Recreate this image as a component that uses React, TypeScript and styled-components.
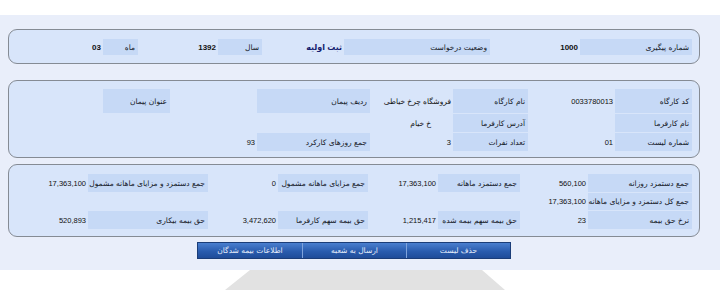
import React from 'react';
import styled, { createGlobalStyle } from 'styled-components';

const Global = createGlobalStyle`
  html, body { margin: 0; padding: 0; background: #ffffff; }
  body { font-family: "DejaVu Sans", sans-serif; }
  #root { width: 720px; }
`;

const Page = styled.div`
  width: 720px;
  height: 290px;
  overflow: hidden;
  display: flex;
  flex-direction: column;
`;

const TopStrip = styled.div`
  height: 15px;
  flex: none;
`;

const Workspace = styled.div`
  background: #e9eefa;
  padding: 14px 20px 11px 8px;
  display: flex;
  flex-direction: column;
`;

const Panel = styled.div<{ $cols: string; $rows: string; $pad: string; $mt: number }>`
  direction: rtl;
  box-sizing: border-box;
  margin-top: ${(p) => p.$mt}px;
  background: #d8e5fa;
  border: 1px solid #858b94;
  border-radius: 9px;
  padding: ${(p) => p.$pad};
  display: grid;
  grid-template-columns: ${(p) => p.$cols};
  grid-template-rows: ${(p) => p.$rows};
  row-gap: 1px;
`;

const Label = styled.div`
  background: #c6d9f6;
  color: #141826;
  font-family: "DejaVu Sans", sans-serif;
  font-size: 7.5px;
  display: flex;
  align-items: center;
  padding-right: 3px;
  white-space: nowrap;
  min-width: 0;
`;

const Value = styled.div<{ $bold?: boolean; $navy?: boolean; $indent?: number }>`
  color: ${(p) => (p.$navy ? '#14206e' : '#111111')};
  font-family: "Liberation Sans", "DejaVu Sans", sans-serif;
  font-weight: ${(p) => (p.$bold ? 700 : 400)};
  font-size: ${(p) => (p.$bold ? 8 : 7.5)}px;
  display: flex;
  align-items: center;
  padding-right: ${(p) => p.$indent ?? 2}px;
  white-space: nowrap;
`;

const Empty = styled.div``;

const ButtonBar = styled.div`
  margin-top: 5px;
  align-self: center;
  display: flex;
  direction: rtl;
  border: 1px solid #1b3d78;
`;

const ActionButton = styled.button`
  width: 104px;
  height: 15px;
  padding: 0;
  margin: 0;
  border: none;
  border-left: 1px solid #7fa3dc;
  background: linear-gradient(#4a7fcf, #2a5cae 55%, #1f4c99);
  color: #e6eefb;
  font-family: "DejaVu Sans", sans-serif;
  font-size: 7.5px;
  cursor: pointer;
  &:last-child { border-left: none; }
`;

const Shadow = styled.div`
  margin-left: 225px;
  width: 280px;
  height: 22px;
  background: #e2e2e2;
  clip-path: polygon(25px 0, 257px 0, 280px 100%, 0 100%);
`;

const cols1 = '112px 90px 146px 82px 44px 80px 35px 88px';
const cols2 = '77px 87px 75px 83px 113px 87px 67px 88px';
const cols3 = '104px 68px 82px 70px 90px 70px 120px 73px';

export default function App() {
  return (
    <Page>
      <Global />
      <TopStrip />
      <Workspace>
        <Panel $cols={cols1} $rows="16px" $pad="9px 7px 8px 6px" $mt={0}>
          <Label>شماره پیگیری</Label>
          <Value $bold>1000</Value>
          <Label>وضعیت درخواست</Label>
          <Value $bold $navy>ثبت اولیه</Value>
          <Label>سال</Label>
          <Value $bold>1392</Value>
          <Label>ماه</Label>
          <Value $bold>03</Value>
        </Panel>

        <Panel $cols={cols2} $rows="24px 18px 18px" $pad="8px 7px 6px 6px" $mt={16}>
          <Label>کد کارگاه</Label>
          <Value>0033780013</Value>
          <Label>نام کارگاه</Label>
          <Value>فروشگاه چرخ خیاطی</Value>
          <Label>ردیف پیمان</Label>
          <Value />
          <Label>عنوان پیمان</Label>
          <Value />

          <Label>نام کارفرما</Label>
          <Value />
          <Label>آدرس کارفرما</Label>
          <Value $indent={22}>خ خیام</Value>
          <Empty />
          <Empty />
          <Empty />
          <Empty />

          <Label>شماره لیست</Label>
          <Value>01</Value>
          <Label>تعداد نفرات</Label>
          <Value>3</Value>
          <Label>جمع روزهای کارکرد</Label>
          <Value>93</Value>
          <Empty />
          <Empty />
        </Panel>

        <Panel $cols={cols3} $rows="18px 17px 18px" $pad="9px 7px 7px 6px" $mt={6}>
          <Label>جمع دستمزد روزانه</Label>
          <Value>560,100</Value>
          <Label>جمع دستمزد ماهانه</Label>
          <Value>17,363,100</Value>
          <Label>جمع مزایای ماهانه مشمول</Label>
          <Value>0</Value>
          <Label>جمع دستمزد و مزایای ماهانه مشمول</Label>
          <Value>17,363,100</Value>

          <Label>جمع کل دستمزد و مزایای ماهانه</Label>
          <Value>17,363,100</Value>
          <Empty />
          <Empty />
          <Empty />
          <Empty />
          <Empty />
          <Empty />

          <Label>نرخ حق بیمه</Label>
          <Value>23</Value>
          <Label>حق بیمه سهم بیمه شده</Label>
          <Value>1,215,417</Value>
          <Label>حق بیمه سهم کارفرما</Label>
          <Value>3,472,620</Value>
          <Label>حق بیمه بیکاری</Label>
          <Value>520,893</Value>
        </Panel>

        <ButtonBar>
          <ActionButton>حذف لیست</ActionButton>
          <ActionButton>ارسال به شعبه</ActionButton>
          <ActionButton>اطلاعات بیمه شدگان</ActionButton>
        </ButtonBar>
      </Workspace>
      <Shadow />
    </Page>
  );
}
